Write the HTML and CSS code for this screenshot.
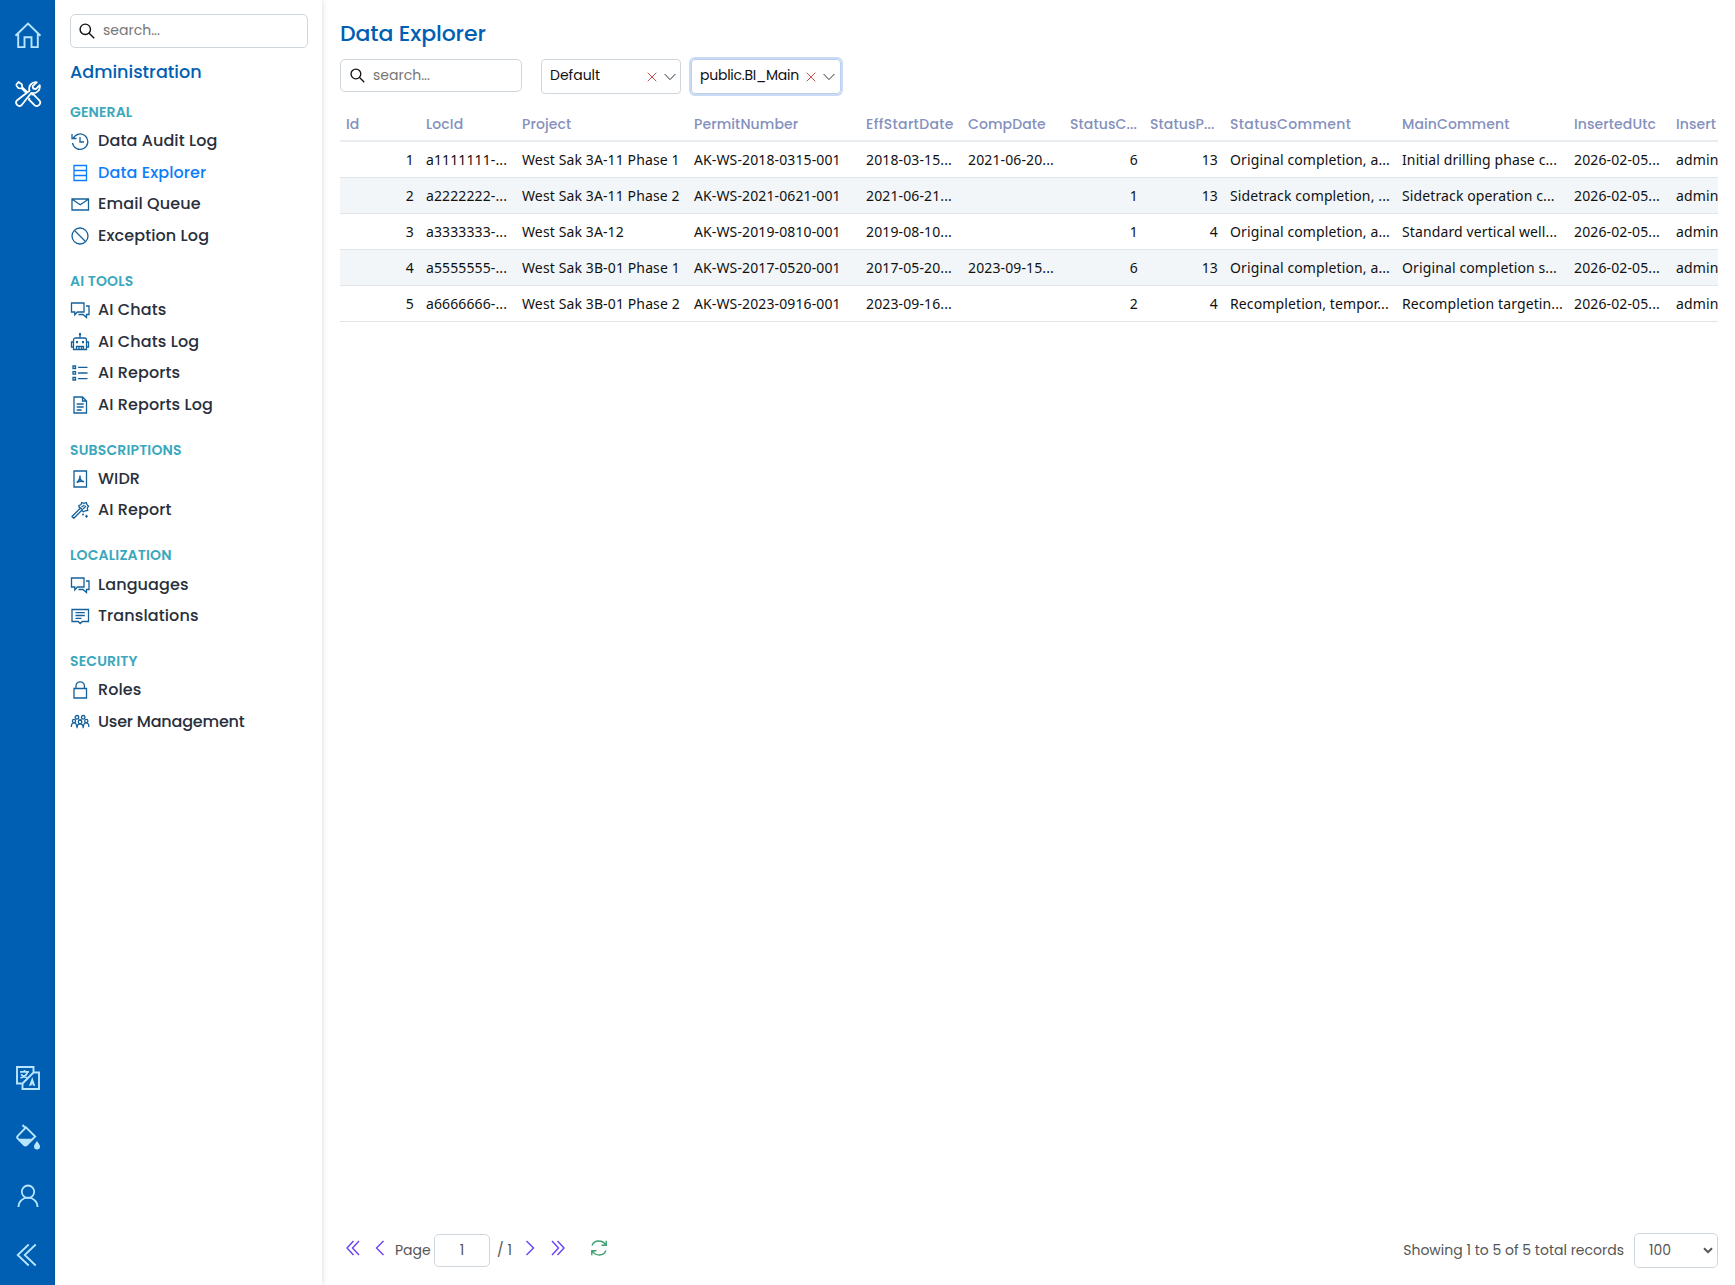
FILE: index.html
```html
<!DOCTYPE html>
<html lang="en">
<head>
  <meta charset="UTF-8" />
  <meta name="viewport" content="width=device-width, initial-scale=1.0"/>
  <title>Data Explorer</title>
  <link rel="stylesheet" href="styles.css">
</head>
<body>
  <div class="app">
    <nav class="rail">
      <a class="rail-btn"><svg viewBox="0 0 28 28"><path d="M1.500 14.700 14 2.500l12.500 12.200M4.200 12.500v13.600h6.300V16.200h7v9.900h6.300V12.500" stroke-width="1.900"/></svg></a>
      <a class="rail-btn active"><svg viewBox="0 0 28 28" stroke-width="2" stroke-linejoin="round"><path d="M2 5 4.500 2l3.300 2.200.5 3.100 4.700 4.700M2 5l2.500 3.200 3.300.1L12 12.500M17.500 14.800l1.700-.6 6.100 6.100a3.400 3.400 0 0 1-4.800 4.800l-5.600-5.600.6-1.700"/><path d="M22.800 2.300a6.500 6.500 0 0 0-7.300 8.400L2.800 20.500a3.400 3.400 0 0 0 4.700 4.800l9.900-12.500a6.500 6.500 0 0 0 8.300-7.600l-3.900 3.900-2.600-.6-.6-2.300z"/></svg></a>
      <span class="rail-space"></span>
      <a class="rail-btn"><svg viewBox="0 0 28 28"><path d="M19.500 8.500V3H3v16.500h5.500M19.500 8.500H25V25H8.500v-5.500z" stroke-width="1.900"/><path d="M6 7.800h9M10.500 6v1.800M13.500 8c-.8 3-3.500 5-7 5.800M7 10.200c1.500 2 3.200 3 6 3.500" stroke-width="1.700"/><path d="M15 21.800 18.300 13l2.900 8.800h-2.100l-.9-1.800-1.100 1.800z" fill="currentColor" stroke="none"/></svg></a>
      <a class="rail-btn"><svg viewBox="0 0 28 28"><path d="m8.500 2 3 3M12 4.300l9.200 9.200-8.400 8.400a2 2 0 0 1-2.800 0l-6.200-6.200a2 2 0 0 1 0-2.800z" stroke-width="1.900"/><path d="M3.500 15.800h16.300l-7 7h-2.600zM23 18c1.800 2.500 3 4 3 5.500a3 3 0 0 1-6 0c0-1.500 1.200-3 3-5.500z" fill="currentColor" stroke="none"/></svg></a>
      <a class="rail-btn"><svg viewBox="0 0 28 28"><circle cx="14" cy="9.700" r="6.200"/><path d="M4.500 25c0-5.500 4-9.300 9.500-9.300s9.500 3.800 9.500 9.300"/></svg></a>
      <a class="rail-btn"><svg viewBox="0 0 28 28"><path d="M14.700 3.500 3.700 14l11 10.500M21.700 3.500 10.700 14l11 10.500"/></svg></a>
    </nav>

    <aside class="sidebar">
      <div class="search side-search">
        <svg viewBox="0 0 16 16"><circle cx="6.300" cy="6.300" r="5.200"/><path d="m10.200 10.200 5 5"/></svg>
        <span>search...</span>
      </div>
      <h2 class="side-title">Administration</h2>

      <div class="group">
        <h3>GENERAL</h3>
        <a class="item"><svg viewBox="0 0 20 20"><path d="M3.300 7a7.700 7.700 0 1 1-.8 5M2 3v4.500h4.500M10 6v5h4"/></svg><span>Data Audit Log</span></a>
        <a class="item selected"><svg viewBox="0 0 20 20"><path d="M4 2.500h12.500v15H4zM4 7.500h12.500M4 12.500h12.500"/></svg><span>Data Explorer</span></a>
        <a class="item"><svg viewBox="0 0 20 20"><path d="M2 5h16.500v11H2zM2.500 5.500l7.700 5.300L18 5.500"/></svg><span>Email Queue</span></a>
        <a class="item"><svg viewBox="0 0 20 20"><circle cx="10" cy="10" r="8"/><path d="m4.500 4.500 11 11"/></svg><span>Exception Log</span></a>
      </div>

      <div class="group">
        <h3>AI TOOLS</h3>
        <a class="item"><svg viewBox="0 0 20 20"><path d="M1.500 3h12.500v9H7.500l-2.700 2.800V12H1.500zM16 6h3v8.500h-2.500v3L13 14.500H8.500"/></svg><span>AI Chats</span></a>
        <a class="item"><svg viewBox="0 0 20 20"><path d="M10 2.500V6M5.500 6h9a2 2 0 0 1 2 2v9.500h-13V8a2 2 0 0 1 2-2zM3.500 10H1.500v5h2M16.500 10h2v5h-2M6.500 17.500v-3h7v3M9 14.500v3M11.500 14.500v3"/><path d="M9 1h2v2.300H9zM6 9h2v2.200H6zM12 9h2v2.200h-2z" fill="currentColor" stroke="none"/></svg><span>AI Chats Log</span></a>
        <a class="item"><svg viewBox="0 0 20 20"><path d="M3 3h2.500v2.500H3zM3 8.700h2.500v2.500H3zM3 14.500h2.500V17H3zM8 4.300h9.500M8 10h9.500M8 15.700h9.500"/></svg><span>AI Reports</span></a>
        <a class="item"><svg viewBox="0 0 20 20"><path d="M4 2h8.500L16.500 6v12H4zM12.500 2v4h4M6.700 9h7M6.700 12h7M6.700 15h5"/></svg><span>AI Reports Log</span></a>
      </div>

      <div class="group">
        <h3>SUBSCRIPTIONS</h3>
        <a class="item"><svg viewBox="0 0 20 20"><path d="M4 2h12.500v16H4z"/><path d="M10 6.500c.3 2.500-.8 5.200-3.300 7.200M10 9.500c.7 1.800 2 3 4 3.300M7 13.300c2-1 4.300-1.200 6.500-.8" stroke-width="1.500"/></svg><span>WIDR</span></a>
        <a class="item"><svg viewBox="0 0 20 20"><path d="m2 16.500 8.500-8.500 1.800 1.800L3.800 18.300zM9.500 8l-.7-2.500 2.200-1 .8-2 2.200.8 2.300-.8.700 2.200 1.500 1.500-1.200 2 .4 2.300-2.400.3-1.800 1-1.500-1M11.500 7l3-2M13 9l3-3"/><path d="m13 13 1 1.500-1 1.500-1-1.500zM16.500 14.500l1.500 1.700-1.500 1.800-1.500-1.800z" fill="currentColor" stroke="none"/></svg><span>AI Report</span></a>
      </div>

      <div class="group">
        <h3>LOCALIZATION</h3>
        <a class="item"><svg viewBox="0 0 20 20"><path d="M1.500 3h12.500v9H7.500l-2.700 2.800V12H1.500zM16 6h3v8.500h-2.500v3L13 14.500H8.500"/></svg><span>Languages</span></a>
        <a class="item"><svg viewBox="0 0 20 20"><path d="M2 3.500h16.500v12h-6.300L10.200 17.500l-2-2H2zM5.500 6.700h9.300M5.500 9.500h9.300M5.500 12.300h6"/></svg><span>Translations</span></a>
      </div>

      <div class="group">
        <h3>SECURITY</h3>
        <a class="item"><svg viewBox="0 0 20 20"><path d="M4 8.500h12.500v9.500H4zM6 8.500V6a4.200 4.200 0 0 1 8.400 0v2.500"/></svg><span>Roles</span></a>
        <a class="item"><svg viewBox="0 0 20 20"><circle cx="7" cy="5.300" r="1.800"/><circle cx="13.200" cy="5.300" r="1.800"/><circle cx="4" cy="9" r="1.600"/><circle cx="16.300" cy="9" r="1.600"/><circle cx="10.100" cy="10" r="1.800"/><path d="M1.300 15c0-5.500 5.500-5.500 5.500 0M13.400 15c0-5.500 5.500-5.500 5.500 0M7 16.200c0-5.700 6.200-5.700 6.200 0M8.500 7.500l1.600.7 1.600-.7"/></svg><span class="snug">User Management</span></a>
      </div>
    </aside>

    <main class="main">
      <h1>Data Explorer</h1>
      <div class="toolbar">
        <div class="search main-search">
          <svg viewBox="0 0 16 16"><circle cx="6.300" cy="6.300" r="5.200"/><path d="m10.200 10.200 5 5"/></svg>
          <span>search...</span>
        </div>
        <div class="combo combo-source">
          <span>Default</span>
          <svg class="clear" viewBox="0 0 10 10"><path d="m.7.7 8.600 8.600M9.300.7.700 9.300"/></svg>
          <svg class="caret" viewBox="0 0 12 8"><path d="m.6 1 5.400 5.600L11.400 1"/></svg>
        </div>
        <div class="combo combo-table focused">
          <span>public.BI_Main</span>
          <svg class="clear" viewBox="0 0 10 10"><path d="m.7.7 8.600 8.600M9.300.7.700 9.300"/></svg>
          <svg class="caret" viewBox="0 0 12 8"><path d="m.6 1 5.400 5.600L11.400 1"/></svg>
        </div>
      </div>

      <div class="grid-wrap">
        <table class="grid">
          <colgroup>
            <col class="w80"><col class="w96"><col class="w172"><col class="w172"><col class="w102"><col class="w102">
            <col class="w80"><col class="w80"><col class="w172"><col class="w172"><col class="w102"><col class="w102">
          </colgroup>
          <thead>
            <tr>
              <th>Id</th><th>LocId</th><th>Project</th><th>PermitNumber</th><th class="wide">EffStartDate</th><th>CompDate</th>
              <th>StatusC...</th><th>StatusP...</th><th class="wide">StatusComment</th><th>MainComment</th><th>InsertedUtc</th><th>Insert</th>
            </tr>
          </thead>
          <tbody>
            <tr><td class="num">1</td><td>a1111111-...</td><td>West Sak 3A-11 Phase 1</td><td>AK-WS-2018-0315-001</td><td>2018-03-15...</td><td>2021-06-20...</td><td class="num">6</td><td class="num">13</td><td>Original completion, a...</td><td>Initial drilling phase c...</td><td>2026-02-05...</td><td>admin</td></tr>
            <tr><td class="num">2</td><td>a2222222-...</td><td>West Sak 3A-11 Phase 2</td><td>AK-WS-2021-0621-001</td><td>2021-06-21...</td><td></td><td class="num">1</td><td class="num">13</td><td>Sidetrack completion, ...</td><td>Sidetrack operation c...</td><td>2026-02-05...</td><td>admin</td></tr>
            <tr><td class="num">3</td><td>a3333333-...</td><td>West Sak 3A-12</td><td>AK-WS-2019-0810-001</td><td>2019-08-10...</td><td></td><td class="num">1</td><td class="num">4</td><td>Original completion, a...</td><td>Standard vertical well...</td><td>2026-02-05...</td><td>admin</td></tr>
            <tr><td class="num">4</td><td>a5555555-...</td><td>West Sak 3B-01 Phase 1</td><td>AK-WS-2017-0520-001</td><td>2017-05-20...</td><td>2023-09-15...</td><td class="num">6</td><td class="num">13</td><td>Original completion, a...</td><td>Original completion s...</td><td>2026-02-05...</td><td>admin</td></tr>
            <tr><td class="num">5</td><td>a6666666-...</td><td>West Sak 3B-01 Phase 2</td><td>AK-WS-2023-0916-001</td><td>2023-09-16...</td><td></td><td class="num">2</td><td class="num">4</td><td>Recompletion, tempor...</td><td>Recompletion targetin...</td><td>2026-02-05...</td><td>admin</td></tr>
          </tbody>
        </table>
      </div>

      <footer class="pager">
        <svg class="nav first" viewBox="0 0 14 16"><path d="M7.500 1 1 8l6.500 7M13 1 6.500 8l6.500 7"/></svg>
        <svg class="nav prev" viewBox="0 0 14 16"><path d="M10.500 1 3.500 8l7 7"/></svg>
        <span class="page-label">Page</span>
        <span class="page-input">1</span>
        <span class="page-total">/ 1</span>
        <svg class="nav next" viewBox="0 0 14 16"><path d="m3.500 1 7 7-7 7"/></svg>
        <svg class="nav last" viewBox="0 0 14 16"><path d="m1 1 6.500 7L1 15M6.500 1l6.500 7-6.500 7"/></svg>
        <svg class="refresh" viewBox="0 0 16 16"><path d="M1 5.500C3.500-.5 11.500-.3 14.800 5M15 10.500C12.500 16.500 4.500 16.300 1.200 11M15.200.8V5.200h-4.700M.8 15.200V10.800h4.700"/></svg>
        <span class="records">Showing 1 to 5 of 5 total records</span>
        <div class="page-size"><span>100</span><svg viewBox="0 0 10 7"><path d="m1 1.200 4 4 4-4"/></svg></div>
      </footer>
    </main>
  </div>
</body>
</html>
```

FILE: styles.css
```css
* {
  box-sizing: border-box;
}

body {
  margin: 0;
  font-family: Poppins, Inter, sans-serif;
  font-size: 14px;
  color: #111;
  background: #fff;
}

svg {
  fill: none;
  stroke: currentColor;
  flex-shrink: 0;
}

h1, h2, h3 {
  margin: 0;
}

.app {
  display: flex;
  height: 1285px;
  overflow: hidden;
}

/* left icon rail */
.rail {
  width: 55px;
  background: #005fb2;
  color: #b8e6ff;
  display: flex;
  flex-direction: column;
  align-items: center;
  padding: 5px 0 1px;
}

.rail-btn {
  height: 59px;
  display: flex;
  align-items: center;
}

.rail-btn svg {
  width: 28px;
  height: 28px;
  stroke-width: 1.8;
}

.rail-btn.active {
  color: #fff;
}

.rail-space {
  flex: 1;
}

/* sidebar */
.sidebar {
  width: 267px;
  padding: 14px 14px 0 15px;
  box-shadow: 0 0 6px rgba(0, 0, 0, 0.16);
}

.search {
  display: flex;
  align-items: center;
  border: 1px solid #d0d7dc;
  border-radius: 5px;
  color: #757575;
  font-size: 14px;
}

.search svg {
  width: 16px;
  height: 16px;
  color: #111;
  stroke-width: 1.4;
}

.side-search {
  height: 34px;
  padding: 0 8px;
  gap: 8px;
}

.side-search span {
  padding-bottom: 2px;
}

.side-title {
  font-size: 17.6px;
  font-weight: 500;
  color: #005fb2;
  line-height: 30px;
  margin: 9px 0 11px;
}

.group {
  margin-bottom: 15.3px;
}

.group h3 {
  font-size: 14px;
  font-weight: 600;
  color: #3ba7bc;
  line-height: 27.5px;
  letter-spacing: 0.15px;
  padding-top: 1px;
  margin-bottom: -1px;
}

.item {
  display: flex;
  align-items: center;
  gap: 8px;
  height: 31.5px;
  color: #292f3b;
  font-size: 16px;
  font-weight: 500;
  letter-spacing: 0.1px;
}

.item span {
  padding-bottom: 1px;
}

.item .snug {
  letter-spacing: -0.2px;
}

.item svg {
  width: 20px;
  height: 20px;
  color: #14619c;
  stroke-width: 1.3;
}

.item.selected, .item.selected svg {
  color: #0d7dfb;
}

/* content */
.main {
  flex: 1;
  min-width: 0;
  padding: 16px 17px 0 18px;
  display: flex;
  flex-direction: column;
}

h1 {
  font-size: 22px;
  font-weight: 500;
  color: #005fb2;
  line-height: 36px;
  letter-spacing: -0.1px;
}

.toolbar {
  display: flex;
  align-items: flex-start;
  margin-top: 7px;
  height: 48px;
}

.main-search {
  width: 182px;
  height: 33px;
  padding: 0 9px 1px;
  gap: 8px;
  margin-right: 19px;
}

.main-search svg {
  width: 15px;
  height: 15px;
}

.combo {
  display: flex;
  align-items: center;
  height: 35px;
  border: 1px solid #d0d7dc;
  border-radius: 4px;
  padding: 0 4px 0 8px;
  font-size: 14px;
}

.combo span {
  flex: 1;
  padding-bottom: 2px;
}

.combo-source {
  width: 140px;
  margin-right: 10px;
}

.combo-table {
  width: 150px;
  padding-right: 5px;
}

.combo-table span {
  letter-spacing: -0.25px;
}

.focused {
  border-color: #b9cfea;
  box-shadow: 0 0 0 2px #c9dbf3;
}

.clear {
  width: 10px;
  height: 10px;
  color: #c9504a;
  margin-right: 7px;
}

.caret {
  width: 12px;
  height: 8px;
  color: #333;
}

.grid-wrap {
  flex: 1;
  overflow: hidden;
}

.grid {
  table-layout: fixed;
  width: 1432px;
  border-collapse: separate;
  border-spacing: 0;
}

.w80 { width: 80px; }
.w96 { width: 96px; }
.w102 { width: 102px; }
.w172 { width: 172px; }

.grid th {
  height: 35px;
  padding: 2px 6px 0;
  border-bottom: 2px solid #e9edf1;
  color: #8490bd;
  font-size: 14px;
  font-weight: 500;
  letter-spacing: 0.1px;
  text-align: left;
  white-space: nowrap;
}

.grid .wide {
  letter-spacing: 0.35px;
}

.grid td {
  height: 36px;
  padding: 0 6px;
  border-bottom: 1px solid #e1e5e9;
  font-family: "Noto Sans", sans-serif;
  font-size: 14px;
  letter-spacing: 0.12px;
  white-space: nowrap;
}

.grid tbody tr:nth-child(even) {
  background: #f2f6f9;
}

.grid .num {
  text-align: right;
}

.pager {
  display: flex;
  align-items: center;
  height: 70px;
  color: #555;
  font-size: 14px;
}

.nav {
  width: 14px;
  height: 16px;
  color: #6941f0;
  stroke-width: 1.4;
  margin-bottom: 4px;
}

.first { margin: 0 13px 4px 6px; }

.page-label {
  width: 39px;
  margin-left: 8px;
}

.page-input {
  width: 56px;
  height: 33px;
  border: 1px solid #d0d7dc;
  border-radius: 5px;
  line-height: 31px;
  text-align: center;
}

.page-total {
  width: 26px;
  margin-left: 7px;
}

.last { margin-left: 14px; }

.refresh {
  width: 16px;
  height: 16px;
  color: #3c9f6f;
  stroke-width: 1.4;
  margin: 0 0 4px 26px;
}

.records {
  margin-left: auto;
}

.page-size {
  display: flex;
  align-items: center;
  justify-content: space-between;
  width: 84px;
  height: 35px;
  margin-left: 10px;
  padding: 0 4px 0 14px;
  border: 1px solid #d0d7dc;
  border-radius: 5px;
}

.page-size svg {
  width: 10px;
  height: 7px;
  stroke-width: 2;
}
```
